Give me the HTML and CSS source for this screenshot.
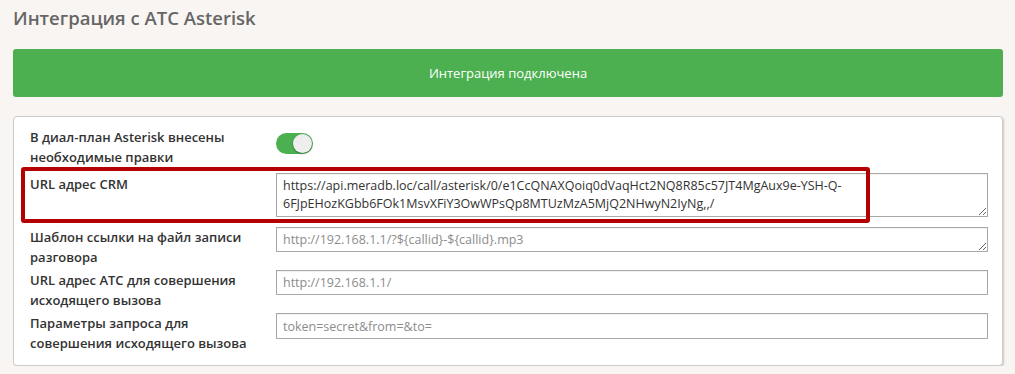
FILE: index.html
```html
<!DOCTYPE html>
<html lang="ru">
<head>
    <meta charset="UTF-8" />
    <meta name="viewport" content="width=device-width, initial-scale=1.0"/>
    <title>Интеграция с АТС Asterisk</title>
    <link rel="stylesheet" href="styles.css">
</head>
<body>
<main class="page">
    <h1 class="page-title">Интеграция с АТС Asterisk</h1>

    <div class="status-bar">Интеграция подключена</div>

    <section class="settings-card">
        <div class="field-row field-row--switch">
            <label class="field-label" for="dialplan">В диал-план Asterisk внесены необходимые правки</label>
            <div class="field-control">
                <label class="switch">
                    <input type="checkbox" id="dialplan" checked>
                    <span class="slider"></span>
                </label>
            </div>
        </div>

        <div class="field-row field-row--crm">
            <label class="field-label" for="crm-url">URL адрес CRM</label>
            <div class="field-control">
                <textarea id="crm-url" class="field-input field-input--tall">https://api.meradb.loc/call/asterisk/0/e1CcQNAXQoiq0dVaqHct2NQ8R85c57JT4MgAux9e-YSH-Q-6FJpEHozKGbb6FOk1MsvXFiY3OwWPsQp8MTUzMzA5MjQ2NHwyN2IyNg,,/</textarea>
            </div>
            <span class="highlight"></span>
        </div>

        <div class="field-row">
            <label class="field-label" for="record-tpl">Шаблон ссылки на файл записи разговора</label>
            <div class="field-control">
                <textarea id="record-tpl" class="field-input" placeholder="http://192.168.1.1/?${callid}-${callid}.mp3"></textarea>
            </div>
        </div>

        <div class="field-row">
            <label class="field-label" for="pbx-url">URL адрес АТС для совершения исходящего вызова</label>
            <div class="field-control">
                <input type="text" id="pbx-url" class="field-input" placeholder="http://192.168.1.1/">
            </div>
        </div>

        <div class="field-row field-row--last">
            <label class="field-label" for="call-params">Параметры запроса для совершения исходящего вызова</label>
            <div class="field-control">
                <input type="text" id="call-params" class="field-input field-input--params" placeholder="token=secret&amp;from=&amp;to=">
            </div>
        </div>
    </section>
</main>
</body>
</html>
```

FILE: styles.css
```css
* {
    box-sizing: border-box;
    font-family: "Open Sans", "Noto Sans", sans-serif;
}
body {
    margin: 0;
    padding: 0;
    background: #f9f5f2;
    color: #333;
}
.page {
    padding: 0 12px 0 13px;
}
.page-title {
    margin: 0;
    padding: 5px 0 18px;
    font-size: 18.5px;
    line-height: 26px;
    font-weight: 600;
    color: #666;
}
.status-bar {
    height: 48px;
    line-height: 48px;
    margin-bottom: 19px;
    background: #4caf50;
    border-radius: 3px;
    color: #fff;
    font-size: 13px;
    text-align: center;
}
.settings-card {
    background: #fff;
    border: 1px solid #ccc;
    border-radius: 4px;
    box-shadow: 1px 1px 2px rgba(0, 0, 0, 0.18);
    padding: 10px 14px 12px 16px;
}
.field-row {
    display: grid;
    grid-template-columns: 246px 1fr;
    align-items: start;
    margin-bottom: 3px;
    position: relative;
}
.field-row--switch {
    margin-bottom: 6px;
}
.field-row--crm {
    margin-bottom: 10px;
}
.field-row--last {
    margin-bottom: 0;
}
.field-label {
    padding-right: 14px;
    font-size: 13px;
    line-height: 20px;
    font-weight: 600;
    color: #333;
    min-height: 40px;
}
.field-row--crm .field-label {
    padding-top: 1px;
    min-height: 44px;
}
.field-input {
    display: block;
    width: 100%;
    height: 25px;
    margin: 0;
    padding: 3px 6px;
    border: 1px solid #a9a9a9;
    border-radius: 0;
    box-shadow: inset 0 1px 1px rgba(0, 0, 0, 0.06);
    background: #fff;
    font-size: 12.5px;
    line-height: 18px;
    color: #333;
    resize: vertical;
    overflow: hidden;
}
.field-input--tall {
    height: 44px;
    padding-top: 3px;
}
.field-input--params {
    height: 26px;
}
.field-input::placeholder {
    color: #8c8c8c;
}

/* toggle */
.switch {
    position: relative;
    display: inline-block;
    width: 37px;
    height: 21px;
    margin-top: 6px;
}
.switch input {
    opacity: 0;
    width: 0;
    height: 0;
}
.slider {
    position: absolute;
    inset: 0;
    background: #4caf50;
    border-radius: 11px;
    cursor: pointer;
}
.slider:before {
    content: "";
    position: absolute;
    width: 19px;
    height: 19px;
    top: 1px;
    right: 1px;
    background: #eee;
    border-radius: 50%;
    box-shadow: 0 1px 2px rgba(0, 0, 0, 0.35);
}

/* red annotation frame over the CRM row */
.highlight {
    position: absolute;
    left: -9px;
    top: -6px;
    width: 849px;
    height: 56px;
    border: 4px solid #b40000;
    border-radius: 3px;
    pointer-events: none;
}
```
